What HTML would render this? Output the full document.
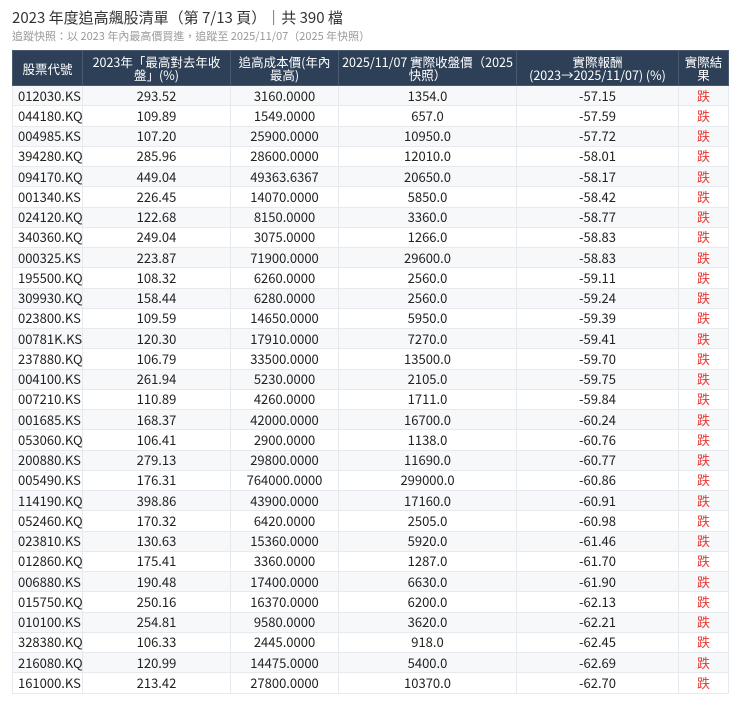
<!DOCTYPE html>
<html><head><meta charset="utf-8"><style>
body{margin:0;background:#fff;font-family:"Noto Sans CJK TC","Liberation Sans",sans-serif;color:#222;width:740px;height:706px;overflow:hidden}
.t{position:absolute;left:12px;top:8px;font-size:15px;line-height:20px;color:#333}
.s{position:absolute;left:12px;top:29px;font-size:11px;line-height:14px;color:#999}
table{position:absolute;left:12px;top:50px;border-collapse:collapse;table-layout:fixed;width:716px;font-size:13px}
th{background:#2e4057;color:#fff;font-weight:normal;height:34px;line-height:13px;padding:0 2px;border:1px solid #4a5a70;font-size:12.5px;white-space:nowrap;overflow:hidden}
td{height:19.25px;line-height:18px;padding:0;text-align:center;border:1px solid #e6e9ed}
td:first-child{text-align:left;padding-left:5px}
tr:nth-child(even) td{background:#f6f8fa}
td.r{color:#e53935}
</style></head><body>
<div class="t">2023 年度追高飆股清單（第 7/13 頁）｜共 390 檔</div>
<div class="s">追蹤快照：以 2023 年內最高價買進，追蹤至 2025/11/07（2025 年快照）</div>
<table>
<colgroup><col style="width:70px"><col style="width:148px"><col style="width:108px"><col style="width:178px"><col style="width:162px"><col style="width:50px"></colgroup>
<tr><th>股票代號</th><th>2023年「最高對去年收<br>盤」(%)</th><th>追高成本價(年內<br>最高)</th><th>2025/11/07 實際收盤價（2025<br>快照）</th><th>實際報酬<br>(2023→2025/11/07) (%)</th><th>實際結<br>果</th></tr>
<tr><td>012030.KS</td><td>293.52</td><td>3160.0000</td><td>1354.0</td><td>-57.15</td><td class="r">跌</td></tr>
<tr><td>044180.KQ</td><td>109.89</td><td>1549.0000</td><td>657.0</td><td>-57.59</td><td class="r">跌</td></tr>
<tr><td>004985.KS</td><td>107.20</td><td>25900.0000</td><td>10950.0</td><td>-57.72</td><td class="r">跌</td></tr>
<tr><td>394280.KQ</td><td>285.96</td><td>28600.0000</td><td>12010.0</td><td>-58.01</td><td class="r">跌</td></tr>
<tr><td>094170.KQ</td><td>449.04</td><td>49363.6367</td><td>20650.0</td><td>-58.17</td><td class="r">跌</td></tr>
<tr><td>001340.KS</td><td>226.45</td><td>14070.0000</td><td>5850.0</td><td>-58.42</td><td class="r">跌</td></tr>
<tr><td>024120.KQ</td><td>122.68</td><td>8150.0000</td><td>3360.0</td><td>-58.77</td><td class="r">跌</td></tr>
<tr><td>340360.KQ</td><td>249.04</td><td>3075.0000</td><td>1266.0</td><td>-58.83</td><td class="r">跌</td></tr>
<tr><td>000325.KS</td><td>223.87</td><td>71900.0000</td><td>29600.0</td><td>-58.83</td><td class="r">跌</td></tr>
<tr><td>195500.KQ</td><td>108.32</td><td>6260.0000</td><td>2560.0</td><td>-59.11</td><td class="r">跌</td></tr>
<tr><td>309930.KQ</td><td>158.44</td><td>6280.0000</td><td>2560.0</td><td>-59.24</td><td class="r">跌</td></tr>
<tr><td>023800.KS</td><td>109.59</td><td>14650.0000</td><td>5950.0</td><td>-59.39</td><td class="r">跌</td></tr>
<tr><td>00781K.KS</td><td>120.30</td><td>17910.0000</td><td>7270.0</td><td>-59.41</td><td class="r">跌</td></tr>
<tr><td>237880.KQ</td><td>106.79</td><td>33500.0000</td><td>13500.0</td><td>-59.70</td><td class="r">跌</td></tr>
<tr><td>004100.KS</td><td>261.94</td><td>5230.0000</td><td>2105.0</td><td>-59.75</td><td class="r">跌</td></tr>
<tr><td>007210.KS</td><td>110.89</td><td>4260.0000</td><td>1711.0</td><td>-59.84</td><td class="r">跌</td></tr>
<tr><td>001685.KS</td><td>168.37</td><td>42000.0000</td><td>16700.0</td><td>-60.24</td><td class="r">跌</td></tr>
<tr><td>053060.KQ</td><td>106.41</td><td>2900.0000</td><td>1138.0</td><td>-60.76</td><td class="r">跌</td></tr>
<tr><td>200880.KS</td><td>279.13</td><td>29800.0000</td><td>11690.0</td><td>-60.77</td><td class="r">跌</td></tr>
<tr><td>005490.KS</td><td>176.31</td><td>764000.0000</td><td>299000.0</td><td>-60.86</td><td class="r">跌</td></tr>
<tr><td>114190.KQ</td><td>398.86</td><td>43900.0000</td><td>17160.0</td><td>-60.91</td><td class="r">跌</td></tr>
<tr><td>052460.KQ</td><td>170.32</td><td>6420.0000</td><td>2505.0</td><td>-60.98</td><td class="r">跌</td></tr>
<tr><td>023810.KS</td><td>130.63</td><td>15360.0000</td><td>5920.0</td><td>-61.46</td><td class="r">跌</td></tr>
<tr><td>012860.KQ</td><td>175.41</td><td>3360.0000</td><td>1287.0</td><td>-61.70</td><td class="r">跌</td></tr>
<tr><td>006880.KS</td><td>190.48</td><td>17400.0000</td><td>6630.0</td><td>-61.90</td><td class="r">跌</td></tr>
<tr><td>015750.KQ</td><td>250.16</td><td>16370.0000</td><td>6200.0</td><td>-62.13</td><td class="r">跌</td></tr>
<tr><td>010100.KS</td><td>254.81</td><td>9580.0000</td><td>3620.0</td><td>-62.21</td><td class="r">跌</td></tr>
<tr><td>328380.KQ</td><td>106.33</td><td>2445.0000</td><td>918.0</td><td>-62.45</td><td class="r">跌</td></tr>
<tr><td>216080.KQ</td><td>120.99</td><td>14475.0000</td><td>5400.0</td><td>-62.69</td><td class="r">跌</td></tr>
<tr><td>161000.KS</td><td>213.42</td><td>27800.0000</td><td>10370.0</td><td>-62.70</td><td class="r">跌</td></tr>
</table>
</body></html>
